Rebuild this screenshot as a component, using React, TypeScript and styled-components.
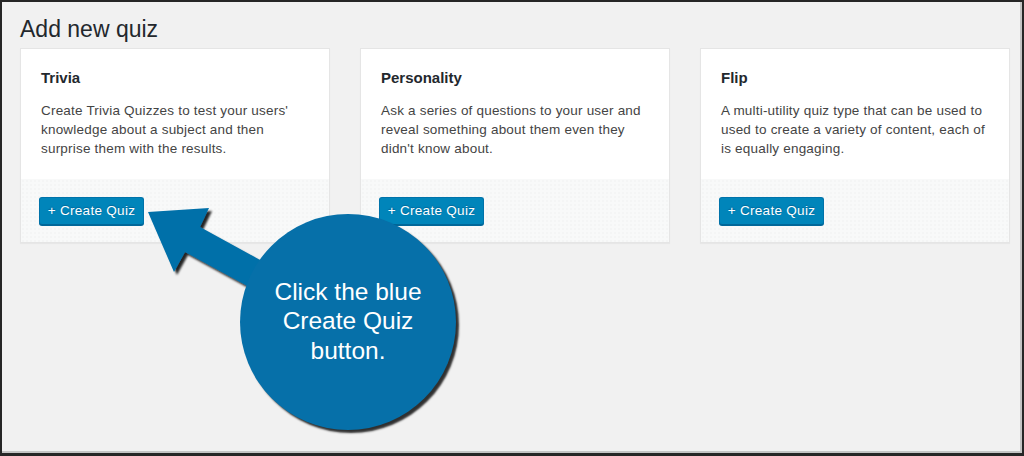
import React from "react";
import styled, { createGlobalStyle } from "styled-components";

const Global = createGlobalStyle`
  html, body { margin: 0; padding: 0; background: #f1f1f1; }
  body { font-family: "Liberation Sans", Arial, sans-serif; overflow: hidden; }
`;

const Frame = styled.div`
  position: relative;
  width: 1024px;
  height: 456px;
  box-sizing: border-box;
  border: 2px solid #262626;
  border-bottom-width: 3px;
  background: #f1f1f1;
  box-shadow: inset -2px -2px 0 #c4c4c4;
  padding: 12px 0 0 18px;
  overflow: hidden;
`;

const Heading = styled.h1`
  margin: 0 0 4px;
  font-size: 23px;
  line-height: 30px;
  font-weight: 400;
  color: #23282d;
`;

const Grid = styled.div`
  display: grid;
  grid-template-columns: repeat(3, 310px);
  gap: 30px;
`;

const Card = styled.div`
  box-sizing: border-box;
  background: #fff;
  border: 1px solid #e5e5e5;
  box-shadow: 0 1px 1px rgba(0, 0, 0, 0.04);
  display: flex;
  flex-direction: column;
`;

const Body = styled.div`
  padding: 18px 20px 21px;
`;

const Title = styled.h2`
  margin: 0 0 13px;
  font-size: 15px;
  line-height: 21px;
  font-weight: 700;
  color: #23282d;
`;

const Desc = styled.p`
  margin: 0;
  font-size: 13.5px;
  line-height: 19px;
  letter-spacing: 0.2px;
  color: #444;
`;

const Footer = styled.div`
  padding: 18px 18px 17px;
  background-color: #f8f9f9;
  background-image: radial-gradient(rgba(0, 0, 0, 0.035) 0.6px, transparent 0.8px);
  background-size: 4px 4px;
`;

const Button = styled.button`
  box-sizing: border-box;
  height: 28px;
  width: 105px;
  padding: 0 0 1px;
  font-family: "Liberation Sans", Arial, sans-serif;
  font-size: 13.5px;
  letter-spacing: 0.3px;
  color: #fff;
  background: #0085ba;
  border: 1px solid #0073aa;
  border-bottom-color: #006799;
  border-radius: 3px;
  box-shadow: 0 1px 0 #006799;
  text-shadow: 0 -1px 1px #006799;
  cursor: pointer;
`;

const ArrowSvg = styled.svg`
  position: absolute;
  left: 0;
  top: 0;
  pointer-events: none;
`;

const Bubble = styled.div`
  position: absolute;
  left: 238px;
  top: 212px;
  width: 216px;
  height: 216px;
  border-radius: 50%;
  background: #0670a9;
  box-shadow: 3px 3px 2px rgba(0, 0, 0, 0.8);
  display: flex;
  align-items: center;
  justify-content: center;
  text-align: center;
  color: #fff;
  font-family: "Liberation Sans", Arial, sans-serif;
  font-size: 24.5px;
  line-height: 29.5px;
  padding-bottom: 2px;
  box-sizing: border-box;
`;

const quizzes = [
  {
    title: "Trivia",
    text: "Create Trivia Quizzes to test your users' knowledge about a subject and then surprise them with the results.",
  },
  {
    title: "Personality",
    text: "Ask a series of questions to your user and reveal something about them even they didn't know about.",
  },
  {
    title: "Flip",
    text: "A multi-utility quiz type that can be used to used to create a variety of content, each of is equally engaging.",
  },
];

export default function App() {
  return (
    <>
      <Global />
      <Frame>
        <Heading>Add new quiz</Heading>
        <Grid>
          {quizzes.map((q) => (
            <Card key={q.title}>
              <Body>
                <Title>{q.title}</Title>
                <Desc>{q.text}</Desc>
              </Body>
              <Footer>
                <Button>+ Create Quiz</Button>
              </Footer>
            </Card>
          ))}
        </Grid>
        <ArrowSvg width="1024" height="456" viewBox="0 0 1024 456">
          <defs>
            <filter id="sh" x="-20%" y="-20%" width="140%" height="140%">
              <feDropShadow dx="3" dy="3" stdDeviation="1.2" floodColor="#000" floodOpacity="0.85" />
            </filter>
          </defs>
          <polygon
            points="146,210 207,206 198,225 300,281 288,307 183,250 172,270"
            fill="#0670a9"
            filter="url(#sh)"
          />
        </ArrowSvg>
        <Bubble>
          Click the blue
          <br />
          Create Quiz
          <br />
          button.
        </Bubble>
      </Frame>
    </>
  );
}
